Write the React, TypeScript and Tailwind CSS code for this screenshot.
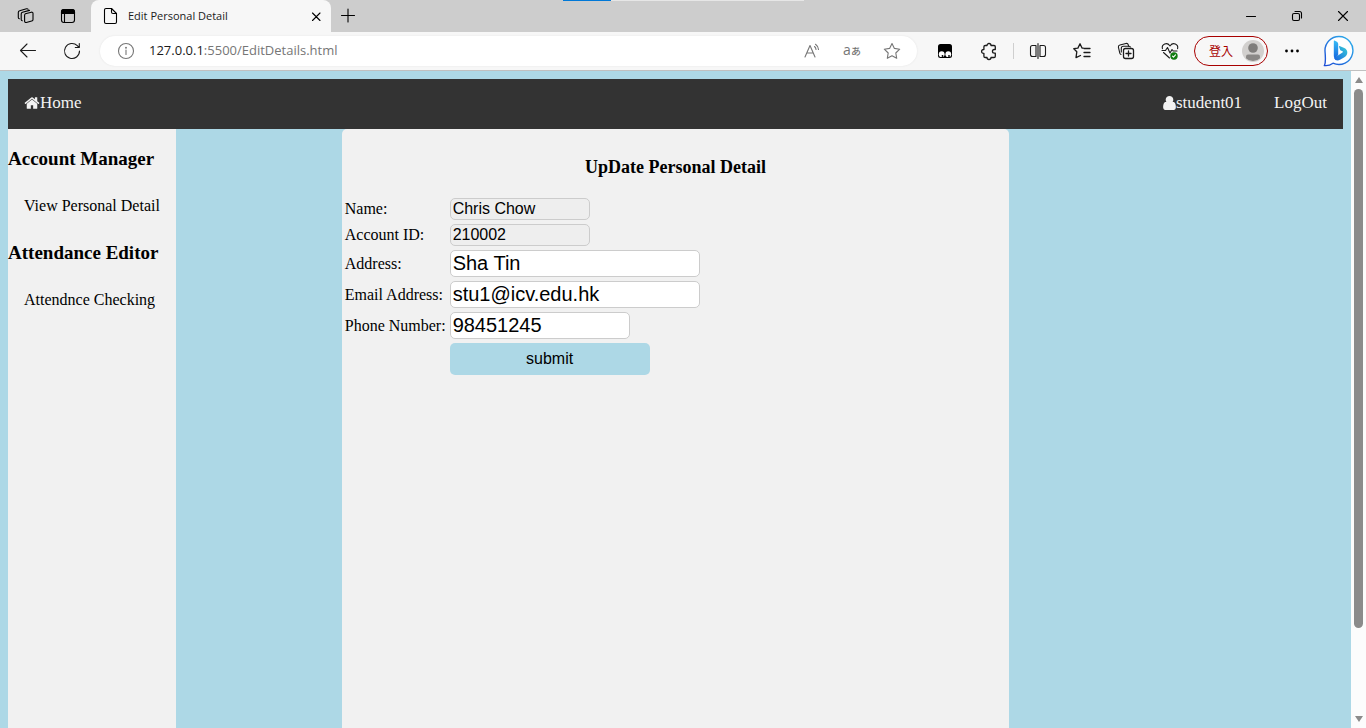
import type { ReactNode } from "react";
import clsx from "clsx";

type IconProps = { children: ReactNode; className?: string };

// Every browser icon is drawn on a 20 x 20 grid
function Icon({ children, className }: IconProps) {
  return (
    <svg
      viewBox="0 0 20 20"
      className={clsx("size-5 shrink-0", className)}
      fill="none"
      stroke="currentColor"
      strokeWidth="1.1"
      strokeLinecap="round"
      strokeLinejoin="round"
      aria-hidden="true"
    >
      {children}
    </svg>
  );
}

type ToolButtonProps = { label: string; wide?: boolean; children: ReactNode };

function ToolButton({ label, wide = true, children }: ToolButtonProps) {
  return (
    <button
      type="button"
      aria-label={label}
      className={clsx("flex h-8 shrink-0 items-center justify-center", wide ? "w-11" : "w-10")}
    >
      {children}
    </button>
  );
}

function TabStrip() {
  return (
    <div className="relative flex h-8 items-stretch bg-[#cdcdcd]">
      <div className="flex w-[91px] shrink-0 items-center pl-1">
        <ToolButton label="Workspaces">
          <Icon>
            <path d="M9.3 7.8l6-1.6c.9-.2 1.7.3 1.7 1.2v6c0 .8-.5 1.4-1.3 1.6l-5.4 1.5c-.9.2-1.7-.3-1.7-1.2V9.3c0-.8.4-1.3 1-1.5z" />
            <path d="M6.3 14.700c-.7 0-1.1-.5-1.1-1.2V8c0-.9.5-1.5 1.3-1.7l7-1.9" />
            <path d="M3.4 12.700c-.7 0-1.1-.5-1.1-1.2V6.400c0-.9.5-1.5 1.3-1.7L10.5 2.800c.7-.2 1.3 0 1.6.5" />
          </Icon>
        </ToolButton>
        <ToolButton label="Tab actions" wide={false}>
          <Icon>
            <rect x="3.5" y="3.5" width="13" height="13" rx="2.5" />
            <path d="M3.5 7.5V6A2.5 2.5 0 0 1 6 3.5h8A2.5 2.5 0 0 1 16.5 6v1.5z" fill="currentColor" />
            <path d="M6.5 8v8" />
          </Icon>
        </ToolButton>
      </div>
      <div className="flex w-60 shrink-0 items-center rounded-t-lg bg-[#f7f7f7] pr-[5px] pl-[9px]">
        <Icon>
          <path d="M6 2.5h5.500l5 5V16a1.500 1.500 0 0 1-1.500 1.500H6A1.500 1.500 0 0 1 4.500 16V4A1.500 1.500 0 0 1 6 2.500z" />
          <path d="M11.500 2.500V6A1.500 1.500 0 0 0 13 7.500h3.500" />
        </Icon>
        <span className="ml-2 flex-1 truncate text-[11px] text-[#1b1b1b]">Edit Personal Detail</span>
        <button type="button" aria-label="Close tab" className="flex size-5 items-center justify-center">
          <Icon>
            <path d="M6.500 7l7.500 7.500M14 7l-7.500 7.500" />
          </Icon>
        </button>
      </div>
      <button type="button" aria-label="New tab" className="flex w-[34px] items-center justify-center">
        <Icon>
          <path d="M3.500 9.500h13M10 3v13" />
        </Icon>
      </button>
      <div className="absolute top-0 left-[563px] flex h-px w-[241px] bg-[#e6e6e6]">
        <span className="w-12 bg-[#0078d7]" />
      </div>
      <div className="ml-auto flex">
        <button type="button" aria-label="Minimize" className="flex w-[46px] items-center justify-center">
          <Icon>
            <path d="M5.500 10.500h9" />
          </Icon>
        </button>
        <button type="button" aria-label="Restore" className="flex w-[46px] items-center justify-center">
          <Icon>
            <rect x="5.500" y="7.500" width="7" height="7" rx="1.500" />
            <path d="M8 5.500h4.500a2 2 0 0 1 2 2V12" />
          </Icon>
        </button>
        <button type="button" aria-label="Close" className="flex w-[46px] items-center justify-center">
          <Icon>
            <path d="M5.500 5.500l9 9M14.500 5.500l-9 9" />
          </Icon>
        </button>
      </div>
    </div>
  );
}

function AddressBar() {
  return (
    <div className="ml-1.5 flex h-[30px] flex-1 items-center rounded-full bg-white pr-[5px] pl-4 shadow-[0_0_2px_#e2e2e2]">
      <Icon className="text-[#767676]">
        <circle cx="10" cy="10" r="7.500" />
        <path d="M10 9v4.500" />
        <circle cx="10" cy="6.700" r=".4" fill="currentColor" />
      </Icon>
      <div className="ml-[13px] flex-1 text-[13px] text-[#767676]">
        <span className="text-[#1b1b1b]">127.0.0.1</span>:5500/EditDetails.html
      </div>
      <div className="flex text-[#767676]">
        <ToolButton label="Read aloud" wide={false}>
          <Icon>
            <path d="M3 16L8 4.500 13 16M4.700 12h6.600" />
            <path d="M12.500 5.500a4 4 0 0 1 1.500 3M13.500 3.300a7 7 0 0 1 3 5.200" />
          </Icon>
        </ToolButton>
        <ToolButton label="Translate" wide={false}>
          <span className="flex items-baseline pb-0.5 font-['Open_Sans','Noto_Sans_CJK_JP',sans-serif] text-[14px] leading-5">
            a<span className="text-[10px] font-medium">あ</span>
          </span>
        </ToolButton>
        <ToolButton label="Add to favorites" wide={false}>
          <Icon>
            <path d="M10 2.500l2.400 4.900 5.300.8-3.900 3.800.9 5.300L10 14.800l-4.700 2.500.9-5.300-3.900-3.800 5.300-.8z" />
          </Icon>
        </ToolButton>
      </div>
    </div>
  );
}

function Toolbar() {
  return (
    <div className="flex h-[39px] items-center border-b border-[#c0c0c0] bg-[#f7f7f7] px-1.5 text-[#1b1b1b]">
      <ToolButton label="Back">
        <Icon>
          <path d="M17.500 9.500H2.500M9 3L2.500 9.500 9 16" />
        </Icon>
      </ToolButton>
      <ToolButton label="Refresh">
        <Icon>
          <path d="M17.500 10a7.500 7.500 0 1 1-2.200-5.300L17 6.400M17.300 2.500v4h-4" />
        </Icon>
      </ToolButton>
      <AddressBar />
      <div className="ml-1.5 flex items-center">
        <ToolButton label="Tampermonkey">
          <Icon>
            <rect x="3" y="3" width="14" height="14" rx="2.500" fill="#000" stroke="none" />
            <circle cx="6.700" cy="13.200" r="2.900" fill="#fff" stroke="none" />
            <circle cx="13.300" cy="13.200" r="2.900" fill="#fff" stroke="none" />
            <circle cx="7.500" cy="15" r=".9" fill="#000" stroke="none" />
            <circle cx="14" cy="15" r=".9" fill="#000" stroke="none" />
          </Icon>
        </ToolButton>
        <ToolButton label="Extensions">
          <Icon>
            <path
              d="M8 4.500a2 2 0 0 1 4 0h3a1.300 1.300 0 0 1 1.300 1.300V8.500h-1a1.800 1.800 0 0 0 0 3.700h1v3A1.300 1.300 0 0 1 15 16.500h-3a2 2 0 0 1-4 0H6.200a1.300 1.300 0 0 1-1.300-1.300v-2.900h-.400a1.900 1.900 0 0 1 0-3.800h.400V5.800a1.300 1.300 0 0 1 1.300-1.300z"
              strokeWidth="1.300"
            />
          </Icon>
        </ToolButton>
        <span className="mx-0.5 h-4 w-px bg-[#cfcfcf]" />
        <ToolButton label="Split screen">
          <Icon>
            <path d="M8 4.500H4.500a2 2 0 0 0-2 2v7a2 2 0 0 0 2 2H8zM12 4.500h3.500a2 2 0 0 1 2 2v7a2 2 0 0 1-2 2H12zM10 2.500v15" />
          </Icon>
        </ToolButton>
        <ToolButton label="Favorites">
          <Icon>
            <path d="M11.200 7.200L10 7 8 2.800 5.900 7.100 1.800 7.700l3 3.100L4 16.700l4.500-2.200" strokeWidth="1.300" />
            <path d="M12 7.500h6M12 11.500h6M12 15.500h6" strokeWidth="1.300" />
          </Icon>
        </ToolButton>
        <ToolButton label="Collections">
          <Icon>
            <rect x="7.500" y="7.500" width="10" height="10" rx="2" strokeWidth="1.300" />
            <path d="M12.500 10v5M10 12.500h5" strokeWidth="1.300" />
            <path d="M5 13.500a2 2 0 0 1-1.200-1.300L2.400 6.200A2 2 0 0 1 3.900 4l6-1.500a2 2 0 0 1 2.400 1.400l.2 1.200" />
            <path d="M5.300 11V7.300a2 2 0 0 1 2-2h5.500a2 2 0 0 1 1.700.7" />
          </Icon>
        </ToolButton>
        <ToolButton label="Browser essentials">
          <Icon>
            <path d="M2.400 7.700a4 4 0 0 1 7.200-3.200l.4.500.4-.5a4 4 0 0 1 7.200 3.200M3.500 11.500l6 5.500" />
            <path d="M2 9.500H5.500L7.500 6.500 10 12l2-3.500 1.200 1.500H17" />
            <circle cx="14" cy="15" r="3.700" fill="#107c10" stroke="none" />
            <path d="M12.500 15.200l1 1 2-2.300" stroke="#fff" />
          </Icon>
        </ToolButton>
        <button
          type="button"
          className="mx-0.5 flex h-[30px] w-[74px] shrink-0 items-center justify-between rounded-full border border-[#a80000] pr-[3px] pl-3.5 text-[12px] text-[#a80000]"
        >
          <span className="font-['Noto_Sans_CJK_TC',sans-serif] leading-none whitespace-nowrap">登入</span>
          <svg viewBox="0 0 22 22" className="size-[22px] shrink-0" aria-hidden="true">
            <circle cx="11" cy="11" r="11" fill="#d2d0ce" />
            <circle cx="11" cy="8" r="4.800" fill="#7f7d7b" />
            <path d="M4 18.200V16.500Q4 14.500 6 14.500h10q2 0 2 2v1.700a10 10 0 0 1-14 0z" fill="#8a8886" />
          </svg>
        </button>
        <ToolButton label="Settings and more">
          <Icon>
            <g fill="#000" stroke="none">
              <circle cx="4.500" cy="10" r="1.400" />
              <circle cx="10" cy="10" r="1.400" />
              <circle cx="15.500" cy="10" r="1.400" />
            </g>
          </Icon>
        </ToolButton>
        <button type="button" aria-label="Bing Chat" className="ml-0.5 flex w-11 shrink-0 items-center justify-center">
          <svg viewBox="0 0 32 32" className="size-8" aria-hidden="true">
            <defs>
              <linearGradient id="bubble" x1="0" y1="1" x2="1" y2="0">
                <stop offset="0" stopColor="#1b4ad5" />
                <stop offset="1" stopColor="#2fb5ec" />
              </linearGradient>
              <linearGradient id="mark" x1="0" y1="0" x2="0" y2="1">
                <stop offset="0" stopColor="#37bdf5" />
                <stop offset="1" stopColor="#1669e0" />
              </linearGradient>
              <linearGradient id="bowl" x1="0" y1="1" x2="1" y2="0">
                <stop offset="0" stopColor="#1a63e0" />
                <stop offset="1" stopColor="#37cfd8" />
              </linearGradient>
            </defs>
            <path
              d="M17 1.500a14 14 0 1 1-6 26.700Q7 31 2.500 30.500Q4 27.500 3 16A14 14 0 0 1 17 1.500z"
              fill="#fff"
              stroke="url(#bubble)"
              strokeWidth="1.400"
            />
            <path
              d="M17.500 11q-.8 0-.5.800l1.300 3.400 2.200 1.100q1 .5 0 1.200L12 23q1 2.500 3.500 2.500 1.300 0 2.500-.7l4-2.400q3.300-2 3.300-5t-3-4.500z"
              fill="url(#bowl)"
            />
            <path d="M12.500 5.500l2.400 1.300q1.300.8 1.300 2.200V20L13 23.500q-1.200-.8-1.200-2.500V6q0-.8.7-.5z" fill="url(#mark)" />
          </svg>
        </button>
      </div>
    </div>
  );
}

function NavBar() {
  return (
    <nav className="flex h-[50px] items-center bg-[#333] px-4 pb-[3px] text-[17px] leading-5 text-[#f2f2f2]">
      <a href="#home" className="flex items-center">
        <svg viewBox="64 128 1664 1536" className="h-3.5 w-4" fill="currentColor" aria-hidden="true">
          <path d="M1472 992v480q0 26-19 45t-45 19h-384v-384h-256v384h-384q-26 0-45-19t-19-45v-480q0-1 .5-3t.5-3l575-474 575 474q1 2 1 6zm223-69l-62 74q-8 9-21 11h-3q-13 0-21-7l-692-577-692 577q-12 8-24 7-13-2-21-11l-62-74q-8-10-7-23.500t11-21.500l719-599q32-26 76-26t76 26l244 204v-195q0-14 9-23t23-9h192q14 0 23 9t9 23v408l219 182q10 8 11 21.500t-7 23.500z" />
        </svg>
        Home
      </a>
      <div className="ml-auto flex gap-8">
        <a href="#account" className="flex items-center">
          <svg viewBox="256 256 1280 1408" className="h-3.5 w-[13px]" fill="currentColor" aria-hidden="true">
            <path d="M1536 1399q0 109-62.500 187t-150.500 78h-854q-88 0-150.500-78t-62.500-187q0-85 8.500-160.500t31.500-152 58.500-131 94-89 134.500-34.500q131 128 313 128t313-128q76 0 134.500 34.500t94 89 58.500 131 31.500 152 8.500 160.500zm-256-759q0 159-112.500 271.500t-271.500 112.500-271.500-112.500-112.500-271.500 112.500-271.500 271.500-112.500 271.500 112.500 112.500 271.500z" />
          </svg>
          student01
        </a>
        <a href="#logout">LogOut</a>
      </div>
    </nav>
  );
}

function Sidebar() {
  return (
    <aside className="flex w-[168px] flex-col gap-[27px] bg-[#f1f1f1] pt-5 leading-5 whitespace-nowrap">
      <h3 className="text-[19px] font-bold">Account Manager</h3>
      <a href="#view" className="px-4">View Personal Detail</a>
      <h3 className="text-[19px] font-bold">Attendance Editor</h3>
      <a href="#attendance" className="px-4">Attendnce Checking</a>
    </aside>
  );
}

const fields = [
  { id: "name", label: "Name:", value: "Chris Chow", style: "h-[22px] w-[140px] text-base bg-[#eee]", locked: true },
  { id: "account", label: "Account ID:", value: "210002", style: "h-[22px] w-[140px] text-base bg-[#eee]", locked: true },
  { id: "address", label: "Address:", value: "Sha Tin", style: "h-[27px] w-[250px] pb-0.5 text-xl bg-white", locked: false },
  { id: "email", label: "Email Address:", value: "stu1@icv.edu.hk", style: "h-[27px] w-[250px] pb-0.5 text-xl bg-white", locked: false },
  { id: "phone", label: "Phone Number:", value: "98451245", style: "h-[27px] w-[180px] pb-0.5 text-xl bg-white", locked: false },
];

function DetailForm() {
  return (
    <main className="rounded-t-[5px] bg-[#f1f1f1]">
      <form onSubmit={(e) => e.preventDefault()}>
        <h3 className="pt-7 pb-[18px] text-center text-[18px] leading-5 font-bold">UpDate Personal Detail</h3>
        <table className="border-separate border-spacing-[2px] leading-5">
          <tbody>
            {fields.map((f) => (
              <tr key={f.id}>
                <td className="p-px whitespace-nowrap">
                  <label htmlFor={f.id}>{f.label}</label>
                </td>
                <td className="p-px">
                  <input
                    id={f.id}
                    type="text"
                    defaultValue={f.value}
                    readOnly={f.locked}
                    className={clsx(
                      "block rounded-[5px] border border-[#ccc] px-0.5 font-['Liberation_Sans',Arial,sans-serif]",
                      f.style,
                    )}
                  />
                </td>
              </tr>
            ))}
            <tr>
              <td />
              <td className="p-px">
                <button
                  type="submit"
                  className="block h-8 w-[200px] rounded-[5px] bg-[#add8e6] font-['Liberation_Sans',Arial,sans-serif] text-base"
                >
                  submit
                </button>
              </td>
            </tr>
          </tbody>
        </table>
      </form>
    </main>
  );
}

function Scrollbar() {
  return (
    <div className="flex w-[15px] shrink-0 flex-col items-center bg-[#fcfcfc] py-1.5 text-[#8b8b8b]" aria-hidden="true">
      <svg viewBox="0 0 8 6" className="h-1.5 w-2" fill="currentColor">
        <path d="M4 0l4 6H0z" />
      </svg>
      <div className="mt-1.5 flex w-full flex-1 justify-center">
        <div className="h-[86%] w-[9px] rounded-full bg-[#8b8b8b]" />
      </div>
      <svg viewBox="0 0 8 6" className="h-1.5 w-2" fill="currentColor">
        <path d="M4 6l4-6H0z" />
      </svg>
    </div>
  );
}

export default function App() {
  return (
    <div className="flex h-screen flex-col overflow-hidden font-['Open_Sans','Noto_Sans',sans-serif]">
      <header>
        <TabStrip />
        <Toolbar />
      </header>
      <div className="flex min-h-0 flex-1">
        <div className="flex flex-1 flex-col bg-[#add8e6] px-2 pt-2 font-['Liberation_Serif','Times_New_Roman',serif] text-base text-black">
          <NavBar />
          <div className="grid flex-1 grid-cols-[1fr_2fr_1fr]">
            <Sidebar />
            <DetailForm />
          </div>
        </div>
        <Scrollbar />
      </div>
    </div>
  );
}
